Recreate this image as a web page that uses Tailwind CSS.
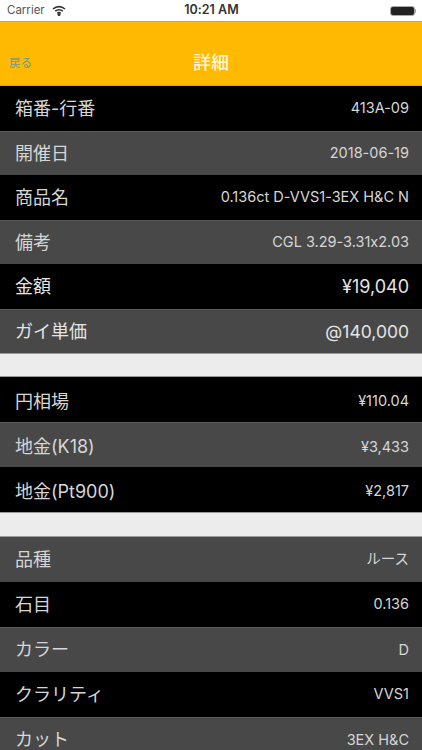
<!DOCTYPE html>
<html lang="ja">
<head>
    <meta charset="UTF-8">
    <title>詳細</title>
    <script src="https://cdn.jsdelivr.net/npm/@tailwindcss/browser@4"></script>
</head>
<body class="h-[750px] overflow-hidden bg-[#ececec] font-['Inter','Noto_Sans_CJK_JP',sans-serif] [font-feature-settings:'calt'_0]">
    <!-- status bar -->
    <div class="h-[21px] bg-white grid grid-cols-3 items-center pl-[7px] pr-[6px] text-[#333]">
        <div class="flex items-center gap-[7px] text-[11.5px] text-[#555]">
            <span>Carrier</span>
            <svg width="14" height="11" viewBox="0 0 14 11" fill="none" stroke="#333" stroke-width="1.6">
                <path d="M1 4 C4.5 .8 9.5 .8 13 4"/>
                <path d="M3.2 6.2 C5.3 4.4 8.7 4.4 10.8 6.2"/>
                <path d="M5.3 8.3 C6.3 7.5 7.7 7.5 8.7 8.3"/>
                <circle cx="7" cy="9.6" r=".7" fill="#333"/>
            </svg>
        </div>
        <span class="text-[12.5px] font-semibold text-center">10:21 AM</span>
        <div class="flex items-center justify-end">
            <div class="w-[25px] h-[10px] rounded-[3px] border border-[#aaa] bg-[#222]"></div>
            <div class="w-[1px] h-[4px] bg-[#aaa]"></div>
        </div>
    </div>

    <!-- nav bar -->
    <div class="relative h-[65px] bg-[#ffba00] border-y border-[#e0a810]">
        <span class="absolute left-[9px] top-[34px] text-[11.5px] leading-[14px] text-[#6e9a8e]">戻る</span>
        <span class="absolute left-0 right-0 top-[30px] text-center text-[18px] leading-[22px] font-medium text-[#fdf6df]">詳細</span>
    </div>

    <div class="flex flex-col">
        <div class="h-[44.5px] bg-black flex items-center justify-between pl-[15px] pr-[13px] text-[#d6d6d6]">
            <span class="text-[18px]">箱番-行番</span><span class="text-[14.5px]">413A-09</span>
        </div>
        <div class="h-[44.5px] bg-[#484848] border-t border-[#5a5a5a] flex items-center justify-between pl-[15px] pr-[13px] text-[#d6d6d6]">
            <span class="text-[18px]">開催日</span><span class="text-[14.5px]">2018-06-19</span>
        </div>
        <div class="h-[44.5px] bg-black flex items-center justify-between pl-[15px] pr-[13px] text-[#d6d6d6]">
            <span class="text-[18px]">商品名</span><span class="text-[14.5px]">0.136ct D-VVS1-3EX H&amp;C N</span>
        </div>
        <div class="h-[44.5px] bg-[#484848] border-t border-[#5a5a5a] flex items-center justify-between pl-[15px] pr-[13px] text-[#d6d6d6]">
            <span class="text-[18px]">備考</span><span class="text-[14.5px]">CGL 3.29-3.31x2.03</span>
        </div>
        <div class="h-[44.5px] bg-black flex items-center justify-between pl-[15px] pr-[13px] pt-[1px] text-[#e4e4e4]">
            <span class="text-[18px]">金額</span><span class="text-[18px]">¥19,040</span>
        </div>
        <div class="h-[44.5px] bg-[#484848] border-t border-[#5a5a5a] flex items-center justify-between pl-[15px] pr-[13px] pt-[1px] text-[#e4e4e4]">
            <span class="text-[18px]">ガイ単価</span><span class="text-[17.5px]">@140,000</span>
        </div>

        <div class="h-[24px] bg-[#ececec] border-y border-[#999]"></div>

        <div class="h-[45px] bg-black flex items-center justify-between pl-[15px] pr-[13px] pt-[3px] text-[#d6d6d6]">
            <span class="text-[18px]">円相場</span><span class="text-[14.5px]">¥110.04</span>
        </div>
        <div class="h-[45px] bg-[#484848] border-t border-[#5a5a5a] flex items-center justify-between pl-[15px] pr-[13px] pt-[3px] text-[#d6d6d6]">
            <span class="text-[18px]">地金(K18)</span><span class="text-[14.5px]">¥3,433</span>
        </div>
        <div class="h-[45px] bg-black flex items-center justify-between pl-[15px] pr-[13px] pt-[3px] text-[#d6d6d6]">
            <span class="text-[18px]">地金(Pt900)</span><span class="text-[14.5px]">¥2,817</span>
        </div>

        <div class="h-[25px] bg-[#ececec] border-y border-[#999]"></div>

        <div class="h-[44.5px] bg-[#484848] flex items-center justify-between pl-[15px] pr-[13px] text-[#d6d6d6]">
            <span class="text-[18px]">品種</span><span class="text-[14.5px]">ルース</span>
        </div>
        <div class="h-[45px] bg-black flex items-center justify-between pl-[15px] pr-[13px] text-[#d6d6d6]">
            <span class="text-[18px]">石目</span><span class="text-[14.5px]">0.136</span>
        </div>
        <div class="h-[45px] bg-[#484848] border-t border-[#5a5a5a] flex items-center justify-between pl-[15px] pr-[13px] text-[#d6d6d6]">
            <span class="text-[18px]">カラー</span><span class="text-[14.5px]">D</span>
        </div>
        <div class="h-[45px] bg-black flex items-center justify-between pl-[15px] pr-[13px] text-[#d6d6d6]">
            <span class="text-[18px]">クラリティ</span><span class="text-[14.5px]">VVS1</span>
        </div>
        <div class="h-[45px] bg-[#484848] border-t border-[#5a5a5a] flex items-center justify-between pl-[15px] pr-[13px] text-[#d6d6d6]">
            <span class="text-[18px]">カット</span><span class="text-[14.5px]">3EX H&amp;C</span>
        </div>
    </div>
</body>
</html>
